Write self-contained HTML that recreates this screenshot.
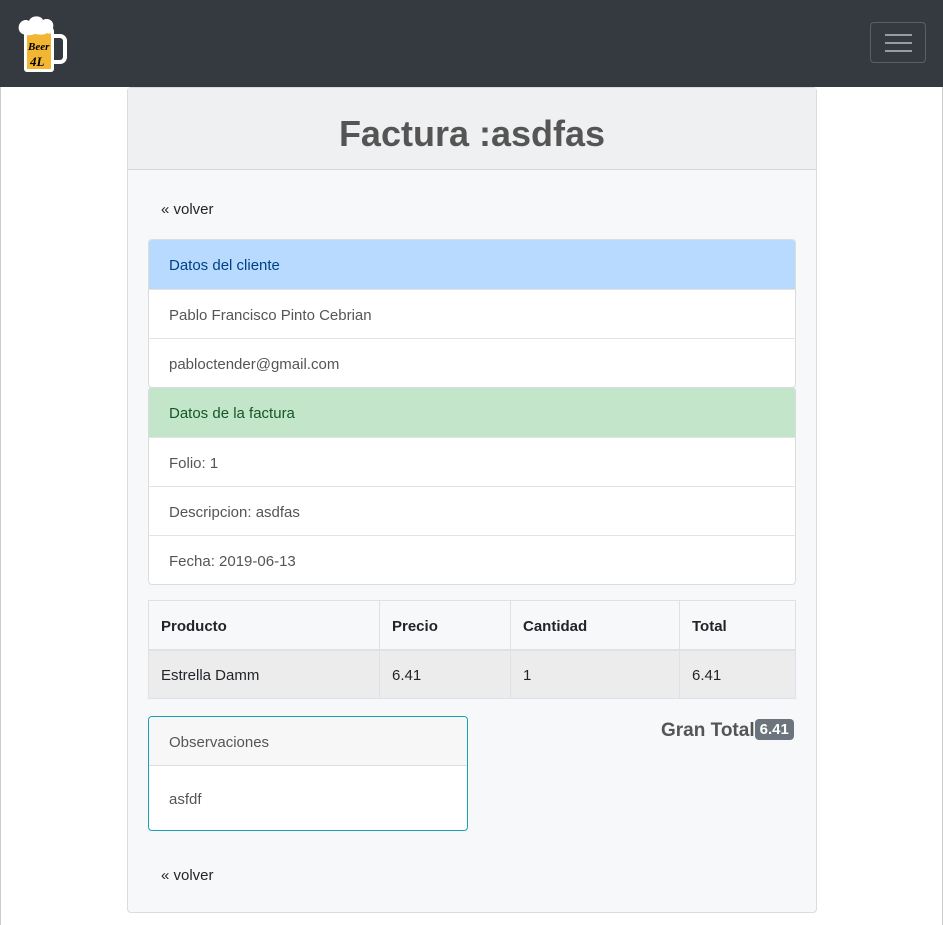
<!DOCTYPE html>
<html><head><meta charset="utf-8"><style>
*{box-sizing:border-box}
body{margin:0;width:943px;height:925px;font-family:"Liberation Sans",sans-serif;font-size:15px;color:#212529;background:#fff;position:relative;overflow:hidden}
.bl{position:absolute;top:0;bottom:0;width:1px;background:#ccc}
nav{position:absolute;left:0;top:0;width:943px;height:87px;background:#343a40}
.tog{position:absolute;left:870px;top:22px;width:56px;height:41px;border:1px solid #5a6067;border-radius:4px}
.tog i{position:absolute;left:14px;width:27px;height:2px;background:#9a9da0}
.card{position:absolute;left:127px;top:87px;width:690px;height:826px;background:#f7f8f9;border:1px solid #dcdcdc;border-radius:4px}
.ch{height:82px;background:#eff0f1;border-bottom:1px solid #d6d6d6;text-align:center;font-size:36px;font-weight:bold;color:#555;line-height:92px}
.abs{position:absolute}
.lg{position:absolute;left:20px;width:648px;border:1px solid #dcdcdc;border-radius:4px;background:#fff;overflow:hidden}
.lg div{height:49px;line-height:51px;padding-left:20px;color:#555;border-top:1px solid #e3e3e3}
.lg div:first-child{border-top:none}
table{position:absolute;left:20px;top:512px;width:648px;border-collapse:collapse}
td,th{border:1px solid #dee2e6;height:49px;padding:3px 12px 0;text-align:left}
th{border-bottom:2px solid #dee2e6}
.obs{position:absolute;left:20px;top:628px;width:320px;height:115px;border:1px solid #17a2b8;border-radius:4px;background:#fff;overflow:hidden;color:#555}
</style></head><body>
<div class="bl" style="left:0"></div><div class="bl" style="right:0"></div>
<nav>
<svg class="abs" style="left:16px;top:12px" width="52" height="62" viewBox="0 0 52 62">
<path d="M36 24h8a5 5 0 0 1 5 5v16a5 5 0 0 1-5 5h-8" fill="none" stroke="#fff" stroke-width="4"/>
<rect x="8" y="16" width="30" height="44" rx="3" fill="#fff"/>
<rect x="11" y="20" width="24" height="37" fill="#f2b632"/>
<path d="M3 18c-2-8 6-12 10-9 2-6 12-6 14-1 5-3 12 1 10 8 2 4-3 7-6 5-4 3-10 1-12 1-5 2-14 2-16-4z" fill="#fff"/>
<text x="12" y="38" font-size="11" font-family="Liberation Serif" font-style="italic" font-weight="bold">Beer</text>
<text x="14" y="54" font-size="13" font-family="Liberation Serif" font-style="italic" font-weight="bold">4L</text>
</svg>
<div class="tog"><i style="top:11px"></i><i style="top:19px"></i><i style="top:27px"></i></div>
</nav>
<div class="card">
<div class="ch">Factura :asdfas</div>
<div class="abs" style="left:33px;top:113px">« volver</div>
<div class="lg" style="top:151px"><div style="background:#b8daff;color:#004085">Datos del cliente</div><div>Pablo Francisco Pinto Cebrian</div><div>pabloctender@gmail.com</div></div>
<div class="lg" style="top:299px"><div style="background:#c3e6cb;color:#155724">Datos de la factura</div><div>Folio: 1</div><div>Descripcion: asdfas</div><div>Fecha: 2019-06-13</div></div>
<table><tr><th style="width:231px">Producto</th><th style="width:131px">Precio</th><th style="width:169px">Cantidad</th><th>Total</th></tr>
<tr style="background:#ececec"><td>Estrella Damm</td><td>6.41</td><td>1</td><td>6.41</td></tr></table>
<div class="abs" style="left:533px;top:631px;font-size:19px;font-weight:bold;color:#555">Gran Total<span style="display:inline-block;background:#6c757d;color:#fff;font-size:15px;padding:2px 5px;border-radius:4px;vertical-align:2px">6.41</span></div>
<div class="obs"><div style="height:49px;line-height:51px;padding-left:20px;background:#f7f7f7;border-bottom:1px solid #ddd">Observaciones</div><div style="padding:25px 20px">asfdf</div></div>
<div class="abs" style="left:33px;top:779px">« volver</div>
</div>
</body></html>
